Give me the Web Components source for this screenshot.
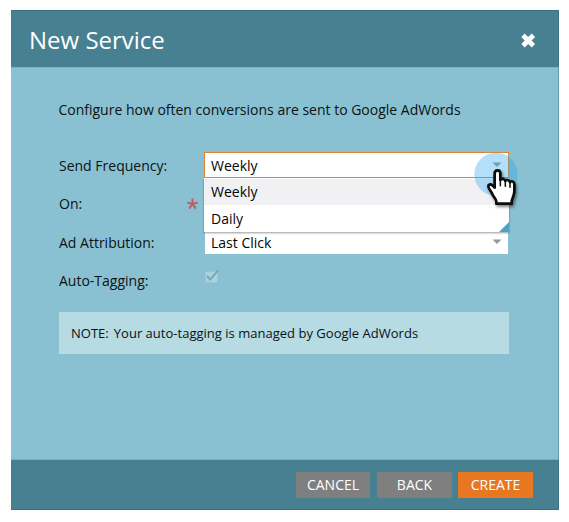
<!DOCTYPE html>
<html lang="en">
<head>
<meta charset="utf-8">
<title>New Service</title>
<style>
html,body{margin:0;background:#fff;overflow:hidden}
body{width:569px;height:522px;box-sizing:border-box;padding:10px 10px 12px 11px;font:14px/20px "Open Sans","Noto Sans",sans-serif;color:#0c1214}
</style>
</head>
<body>
<service-dialog heading="New Service">
  <intro-text>Configure how often conversions are sent to Google AdWords</intro-text>
  <form-row label="Send Frequency:">
    <combo-box value="Weekly" open>
      <combo-option selected>Weekly</combo-option>
      <combo-option>Daily</combo-option>
    </combo-box>
  </form-row>
  <form-row label="On:" required></form-row>
  <form-row label="Ad Attribution:" style="--h:39px"><combo-box value="Last Click"></combo-box></form-row>
  <form-row label="Auto-Tagging:"><check-box></check-box></form-row>
  <note-box><span>NOTE:</span><span>Your auto-tagging is managed by Google AdWords</span></note-box>
  <dialog-button slot="footer" style="width:74px;margin-right:7px">CANCEL</dialog-button>
  <dialog-button slot="footer" style="width:75px;margin-right:6px">BACK</dialog-button>
  <dialog-button slot="footer" primary style="width:75px">CREATE</dialog-button>
</service-dialog>
<hand-pointer></hand-pointer>
<script>
const define = (name, render) => customElements.define(name, class extends HTMLElement {
  connectedCallback() {
    if (!this.shadowRoot) this.attachShadow({mode: 'open'}).innerHTML = render(this);
  }
});

define('service-dialog', el => `
<style>
:host{display:flex;flex-direction:column;height:500px;box-sizing:border-box;background:#89c1d2;box-shadow:inset -1px 0 #5d9bad}
header,footer{background:#478091;display:flex;align-items:center;box-sizing:border-box;flex:none}
header{height:57px;padding:2px 21px 0 18px;justify-content:space-between;border-top:1px solid #386f80;border-right:1px solid #3b7283}
h1{margin:0;font-size:24px;font-weight:400;line-height:32px;color:#fff}
main{flex:1;padding:32px 50px 0 48px;border-top:1px solid #7bb2c4;border-bottom:1px solid #78afc0;margin-right:1px}
footer{height:50px;padding:0 25px 0 0;justify-content:flex-end;border-bottom:1px solid #386f80;border-right:1px solid #3b7283}
svg{display:block;margin-top:1px}
</style>
<header><h1>${el.getAttribute('heading')}</h1>
<svg width="17" height="17" viewBox="0 0 17 17"><path d="M3 3.3L13.4 13.7M13.4 3.3L3 13.7" stroke="#fff" stroke-width="4.8"/></svg></header>
<main><slot></slot></main>
<footer><slot name="footer"></slot></footer>`);

define('intro-text', () => `
<style>:host{display:block;height:47px;margin-left:-.6px;line-height:20px;white-space:nowrap;font-size:14px}</style><slot></slot>`);

define('form-row', el => `
<style>
:host{display:grid;grid-template-columns:127px 19px 304px;align-items:center;height:var(--h,38px)}
.req{display:block}
.field{grid-column:3}
label{white-space:nowrap}
</style>
<label>${el.getAttribute('label')}</label>
${el.hasAttribute('required') ? '<svg class="req" width="13" height="12" viewBox="0 0 13 12"><path d="M6.5 6V.6M6.5 6L1.2 4.6M6.5 6L11.8 4.6M6.5 6L3.2 10.6M6.5 6L9.8 10.6" stroke="#c45a5c" stroke-width="1.9" fill="none"/></svg>' : ''}
<div class="field"><slot></slot></div>`);

define('combo-box', el => `
<style>
:host{display:block;position:relative;z-index:1;width:303px}
:host([open]){z-index:2;width:305px;margin-left:-1px;padding-bottom:2px}
.box{display:flex;align-items:center;justify-content:space-between;height:22px;background:#fff;padding:0 6px;color:#050505}
:host([open]) .box{position:relative;z-index:1;height:26px;box-sizing:border-box;border:1px solid #df8432;padding-top:2px}
.list{display:none}
:host([open]) .list{display:block;position:absolute;top:26px;left:0;width:305px;height:54px;padding-top:1px;box-sizing:border-box;background:#fff;box-shadow:0 1px 2px #0006}
.grip{position:absolute;right:0;bottom:0;width:10px;height:10px;background:#4ba1c6;clip-path:polygon(100% 0,100% 100%,0 100%)}
.box svg{margin-bottom:3px}
</style>
<div class="box"><span>${el.getAttribute('value')}</span><svg width="10" height="5" viewBox="0 0 10 5"><path d="M.5 .5H9.5L5 5Z" fill="#999"/></svg></div>
<div class="list"><slot></slot><div class="grip"></div></div>`);

define('combo-option', () => `
<style>:host{display:flex;align-items:center;height:27px;padding-left:7px;color:#050505}:host([selected]){height:26px;background:#f1f1f4}</style><slot></slot>`);

define('check-box', () => `
<style>:host{display:block;height:24px}svg{display:block}</style>
<svg width="15" height="15" viewBox="0 0 15 15"><rect x=".5" y="2.5" width="12" height="11" rx="1" fill="#a9d2df" stroke="#9bc4d0"/><path d="M2 7L5.2 10.5L13.3 1.2" fill="none" stroke="#7ba7b3" stroke-width="1.9"/></svg>`);

define('note-box', () => `
<style>:host{display:flex;align-items:center;gap:5px;width:450px;height:42px;margin-top:12px;padding-left:12px;box-sizing:border-box;background:#b6dbe2;white-space:nowrap;font-size:13px;letter-spacing:.015px}</style><slot></slot>`);

define('dialog-button', () => `
<style>:host{display:flex;align-items:center;justify-content:center;height:26px;background:#7f7f7f;color:#fff;font-size:14px}:host([primary]){background:#e87722}</style><slot></slot>`);

define('hand-pointer', () => `
<style>:host{position:absolute;z-index:5;left:470px;top:145px}svg{display:block}</style>
<svg width="60" height="70" viewBox="90 15 180 210">
<defs><filter id="s" x="-30%" y="-30%" width="170%" height="170%"><feDropShadow dx="4" dy="6" stdDeviation="4" flood-opacity=".5"/></filter></defs>
<circle cx="168" cy="103" r="65" fill="rgb(33,165,235)" fill-opacity=".34"/>
<path filter="url(#s)" d="M173 91C167 91 164 95 164 101V143L157 136C152 131 144 134 145 140C146 147 153 152 156 160C160 172 169 176 169 184V191H215V184C216 175 223 167 223 153V132C223 124 213 121 210 127C208 119 199 117 196 123C193 115 185 115 181 120V101C181 95 178 91 173 91Z" fill="#fff" stroke="#0a0a0a" stroke-width="8" stroke-linejoin="round"/>
<path d="M181 119V137M196 123V139M210 127V142" stroke="#0a0a0a" stroke-width="4.5" stroke-linecap="round"/>
</svg>`);
</script>
</body>
</html>
